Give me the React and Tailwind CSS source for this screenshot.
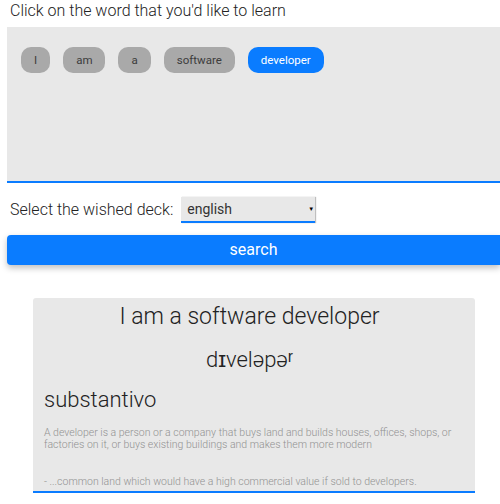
import { useState } from 'react'

const WORDS = ['I', 'am', 'a', 'software', 'developer']

function Pill({ word, active, onClick }) {
  return (
    <button
      onClick={onClick}
      className={`h-[26px] rounded-[10px] px-[13px] text-[11.5px] font-normal leading-[26px] ${
        active ? 'bg-[#0a7cff] text-white' : 'bg-[#a9a9a9] text-[#3c3c3c]'
      }`}
    >
      {word}
    </button>
  )
}

export default function App() {
  const [selected, setSelected] = useState('developer')
  return (
    <div className="w-[500px] overflow-hidden font-['Roboto',sans-serif] font-light text-[#222]">
      <div className="pl-[10px] pt-[1px] text-[16px] leading-[20px]">
        Click on the word that you'd like to learn
      </div>

      <div className="ml-[7px] mt-[6px] h-[156px] border-b-2 border-[#0a7cff] bg-[#e8e8e8] pl-[14px] pt-[20px]">
        <div className="flex gap-[13px]">
          {WORDS.map((w) => (
            <Pill key={w} word={w} active={selected === w} onClick={() => setSelected(w)} />
          ))}
        </div>
      </div>

      <div className="mt-[14px] flex items-center pl-[10px]">
        <span className="text-[16px]">Select the wished deck:</span>
        <div className="ml-[8px] flex h-[26px] w-[134px] items-center justify-between border-b-2 border-[#0a7cff] bg-[#e8e8e8] pl-[6px] pr-[1px] shadow-[1px_0_1px_rgba(0,0,0,0.25)]">
          <span className="text-[14px] font-normal text-[#333]">english</span>
          <span className="text-[6px] leading-none text-black">▼</span>
        </div>
      </div>

      <button className="ml-[7px] mt-[12px] h-[30px] w-[493px] rounded-l-[4px] bg-[#0a7cff] text-[16px] font-normal text-white shadow-[0_3px_6px_rgba(0,0,0,0.25)]">
        search
      </button>

      <div className="ml-[33px] mt-[33px] w-[442px] rounded-t-[3px] border-b-2 border-[#0a7cff] bg-[#e8e8e8] pb-[3px] pl-[11px] pr-[20px] pt-[4px]">
        <div className="text-center text-[23px] leading-[30px] text-[#222]">I am a software developer</div>
        <div className="mt-[14px] text-center text-[22px] leading-[28px] text-[#222]">dɪveləpəʳ</div>
        <div className="mt-[12px] text-[22px] leading-[28px] text-[#222]">substantivo</div>
        <div className="mt-[13px] text-[10.5px] leading-[12px] text-[#929292]">
          A developer is a person or a company that buys land and builds houses, offices, shops, or
          factories on it, or buys existing buildings and makes them more modern
        </div>
        <div className="mt-[25px] whitespace-nowrap text-[10.5px] leading-[12px] text-[#929292]">
          - ...common land which would have a high commercial value if sold to developers.
        </div>
      </div>
    </div>
  )
}
